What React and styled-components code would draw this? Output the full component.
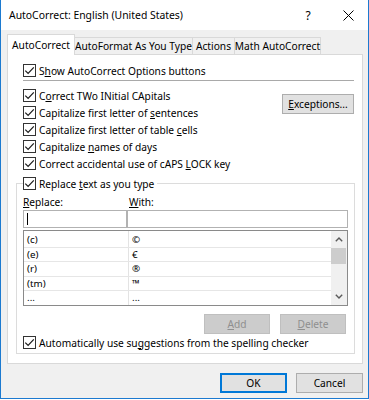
import React from "react";
import styled, { createGlobalStyle } from "styled-components";

const GlobalStyle = createGlobalStyle`
  html, body {
    margin: 0;
    padding: 0;
    background: #ffffff;
  }
  body {
    font-family: "Noto Sans", "Liberation Sans", sans-serif;
    font-size: 10.2px;
    color: #000000;
  }
  * {
    box-sizing: border-box;
  }
`;

const tabs = [
  { label: "AutoCorrect", width: 68, active: true },
  { label: "AutoFormat As You Type", width: 119 },
  { label: "Actions", width: 43 },
  { label: "Math AutoCorrect", width: 87 },
];

const entries = [
  ["(c)", "©"],
  ["(e)", "€"],
  ["(r)", "®"],
  ["(tm)", "™"],
  ["...", "..."],
];

const Check = () => (
  <Box>
    <svg width="11" height="11" viewBox="0 0 11 11">
      <path
        d="M1.3 5.6 L4.1 8.4 L9.8 2.3"
        fill="none"
        stroke="#1a1a1a"
        strokeWidth="1.2"
      />
    </svg>
  </Box>
);

const Chevron = ({ down }) => (
  <svg width="8" height="5" viewBox="0 0 8 5">
    <path
      d={down ? "M0.8 0.8 L4 4 L7.2 0.8" : "M0.8 4.2 L4 1 L7.2 4.2"}
      fill="none"
      stroke="#5a5a5a"
      strokeWidth="1.4"
    />
  </svg>
);

const App = () => {
  return (
    <>
      <GlobalStyle />
      <Window>
        <TitleBar>
          <Title>AutoCorrect: English (United States)</Title>
          <CaptionButton>?</CaptionButton>
          <CaptionButton>
            <svg width="11" height="11" viewBox="0 0 11 11">
              <path d="M0.5 0.5 L10.5 10.5 M10.5 0.5 L0.5 10.5" stroke="#000" strokeWidth="1" />
            </svg>
          </CaptionButton>
        </TitleBar>

        <Body>
          <TabStrip>
            {tabs.map((t) => (
              <Tab key={t.label} $active={t.active} $w={t.width}>
                {t.label}
              </Tab>
            ))}
          </TabStrip>

          <Panel>
            <Option $indent>
              <Check />
              <span>
                S<Key>h</Key>ow AutoCorrect Options buttons
              </span>
            </Option>
            <Separator />

            <Options>
              <OptionList>
                <Option>
                  <Check />
                  <span>
                    C<Key>o</Key>rrect TWo INitial CApitals
                  </span>
                </Option>
                <Option>
                  <Check />
                  <span>
                    Capitalize first letter of <Key>s</Key>entences
                  </span>
                </Option>
                <Option>
                  <Check />
                  <span>
                    Capitalize first letter of table <Key>c</Key>ells
                  </span>
                </Option>
                <Option>
                  <Check />
                  <span>
                    Capitalize <Key>n</Key>ames of days
                  </span>
                </Option>
                <Option>
                  <Check />
                  <span>
                    Correct accidental use of cAPS <Key>L</Key>OCK key
                  </span>
                </Option>
              </OptionList>
              <Button $w={72}>
                <Key>E</Key>xceptions...
              </Button>
            </Options>

            <Group>
              <Legend>
                <Check />
                <span>
                  Replace <Key>t</Key>ext as you type
                </span>
              </Legend>

              <Columns>
                <FieldLabel>
                  <Key>R</Key>eplace:
                </FieldLabel>
                <FieldLabel $pad>
                  <Key>W</Key>ith:
                </FieldLabel>
              </Columns>
              <InputRow>
                <TextBox>
                  <Caret />
                </TextBox>
                <TextBox />
              </InputRow>

              <List>
                <ListBody>
                  {entries.map(([from, to]) => (
                    <ListRow key={from}>
                      <Cell>{from}</Cell>
                      <Cell $symbol>{to}</Cell>
                    </ListRow>
                  ))}
                </ListBody>
                <ScrollBar>
                  <Arrow>
                    <Chevron />
                  </Arrow>
                  <Thumb />
                  <Track />
                  <Arrow>
                    <Chevron down />
                  </Arrow>
                </ScrollBar>
              </List>

              <ListButtons>
                <Button $w={66} disabled>
                  <Key>A</Key>dd
                </Button>
                <Button $w={66} disabled>
                  <Key>D</Key>elete
                </Button>
              </ListButtons>

              <Option>
                <Check />
                <span>
                  Automatically use su<Key>g</Key>gestions from the spelling checker
                </span>
              </Option>
            </Group>
          </Panel>

          <Footer>
            <Button $w={67} $primary>
              OK
            </Button>
            <Button $w={67}>Cancel</Button>
          </Footer>
        </Body>
      </Window>
    </>
  );
};

export default App;

const Window = styled.div`
  width: 369px;
  height: 399px;
  display: flex;
  flex-direction: column;
  background: #f0f0f0;
  border: 1px solid #1c7ad0;
  border-top: none;
`;

const TitleBar = styled.div`
  height: 30px;
  flex: none;
  display: flex;
  align-items: center;
  background: #ffffff;
  padding-left: 8px;
  font-size: 10.4px;
`;

const Title = styled.div`
  flex: 1;
  white-space: nowrap;
`;

const CaptionButton = styled.div`
  width: 40px;
  height: 30px;
  display: flex;
  align-items: center;
  justify-content: center;
  font-size: 12px;
`;

const Body = styled.div`
  flex: 1;
  display: flex;
  flex-direction: column;
  padding: 4px 5px 0 6px;
`;

const TabStrip = styled.div`
  height: 20px;
  display: flex;
  align-items: flex-end;
`;

const Tab = styled.div`
  position: relative;
  width: ${(p) => p.$w}px;
  height: ${(p) => (p.$active ? 21 : 17)}px;
  margin-left: ${(p) => (p.$active ? 0 : -1)}px;
  margin-bottom: ${(p) => (p.$active ? -1 : 0)}px;
  z-index: ${(p) => (p.$active ? 1 : 0)};
  display: flex;
  align-items: center;
  justify-content: center;
  white-space: nowrap;
  background: ${(p) => (p.$active ? "#ffffff" : "#f0f0f0")};
  border: 1px solid #d9d9d9;
  border-bottom: none;
  padding-bottom: ${(p) => (p.$active ? 1 : 0)}px;
`;

const Panel = styled.div`
  height: 310px;
  flex: none;
  background: #ffffff;
  border: 1px solid #d9d9d9;
  padding-top: 7px;
`;

const Option = styled.label`
  height: 17px;
  display: flex;
  align-items: center;
  gap: 3px;
  white-space: nowrap;
  margin-left: ${(p) => (p.$indent ? 15 : 0)}px;
`;

const Box = styled.span`
  width: 13px;
  height: 13px;
  flex: none;
  display: inline-flex;
  align-items: center;
  justify-content: center;
  background: #ffffff;
  border: 1px solid #333333;
`;

const Key = styled.u`
  text-decoration: underline;
  text-underline-offset: 1px;
`;

const Separator = styled.div`
  height: 1px;
  margin: 1px 8px 0 15px;
  background: #a9a9a9;
`;

const Options = styled.div`
  display: flex;
  justify-content: space-between;
  align-items: flex-start;
  margin: 6px 8px 0 15px;
`;

const OptionList = styled.div`
  display: flex;
  flex-direction: column;
`;

const Button = styled.button`
  width: ${(p) => p.$w}px;
  height: 20px;
  flex: none;
  margin-top: 7px;
  padding: 0;
  font: inherit;
  color: ${(p) => (p.disabled ? "#8f8f8f" : "#000000")};
  background: ${(p) => (p.disabled ? "#cccccc" : "#e1e1e1")};
  border: ${(p) =>
    p.$primary
      ? "2px solid #0078d7"
      : p.disabled
      ? "1px solid #bfbfbf"
      : "1px solid #adadad"};
`;

const Group = styled.fieldset`
  margin: 3px 7px 0 8px;
  padding: 0 6px 2px 6px;
  border: 1px solid #dcdcdc;
  min-inline-size: 0;
`;

const Legend = styled.legend`
  height: 17px;
  padding: 0 3px 0 0;
  display: flex;
  align-items: center;
  gap: 3px;
  white-space: nowrap;
`;

const Columns = styled.div`
  display: grid;
  grid-template-columns: 104px 1fr;
  height: 14px;
  margin-top: 3px;
  align-items: center;
`;

const FieldLabel = styled.div`
  padding-left: ${(p) => (p.$pad ? 2 : 0)}px;
`;

const InputRow = styled.div`
  display: grid;
  grid-template-columns: 104px 1fr;
  margin-top: 1px;
`;

const TextBox = styled.div`
  height: 18px;
  display: flex;
  align-items: center;
  background: #ffffff;
  border: 1px solid #b2b2b2;
`;

const Caret = styled.span`
  width: 1px;
  height: 12px;
  margin-left: 3px;
  background: #000000;
`;

const List = styled.div`
  height: 76px;
  margin-top: 2px;
  display: flex;
  background: #ffffff;
  border: 1px solid #8a8a8a;
  overflow: hidden;
`;

const ListBody = styled.div`
  flex: 1;
  padding-top: 2px;
  background: linear-gradient(#e3e3e3, #e3e3e3) 104px 0 / 1px 100% no-repeat;
`;

const ListRow = styled.div`
  display: grid;
  grid-template-columns: 104px 1fr;
  height: 14.5px;
  align-items: center;
  border-bottom: 1px solid #e6e6e6;
  font-size: 9.8px;
`;

const Cell = styled.div`
  padding-left: ${(p) => (p.$symbol ? 4 : 3)}px;
  white-space: nowrap;
`;

const ScrollBar = styled.div`
  width: 16px;
  display: flex;
  flex-direction: column;
  background: #f0f0f0;
`;

const Arrow = styled.div`
  height: 17px;
  display: flex;
  align-items: center;
  justify-content: center;
`;

const Thumb = styled.div`
  height: 16px;
  margin: 0 1px 0 0;
  background: #cdcdcd;
`;

const Track = styled.div`
  flex: 1;
`;

const ListButtons = styled.div`
  display: flex;
  justify-content: flex-end;
  gap: 10px;
  margin: 1px 2px 0 0;
`;

const Footer = styled.div`
  display: flex;
  justify-content: flex-end;
  gap: 9px;
  margin-top: 2px;
`;
